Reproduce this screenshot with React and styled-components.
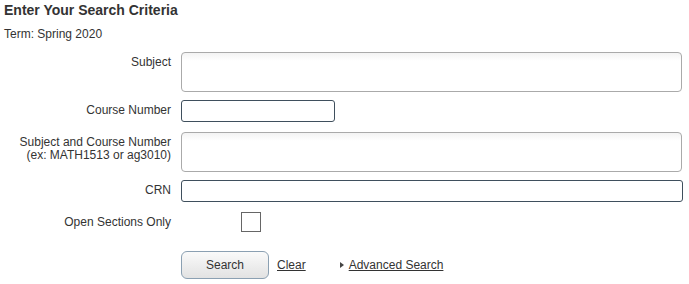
import React from 'react';
import styled, { createGlobalStyle } from 'styled-components';

const Global = createGlobalStyle`
  body {
    margin: 0;
    padding: 0 4px;
    font-family: "Liberation Sans", Arial, sans-serif;
    color: #333;
    background: #fff;
  }
`;

const Page = styled.div`
  padding-top: 2px;
`;

const Title = styled.h2`
  margin: 0;
  font-size: 14px;
  line-height: 16px;
  font-weight: bold;
  color: #333;
`;

const Term = styled.div`
  margin-top: 9px;
  font-size: 12px;
  line-height: 14px;
`;

const Form = styled.div`
  margin-top: 11px;
  display: grid;
  grid-template-columns: 167px 501px;
  column-gap: 10px;
  align-items: start;
`;

const Label = styled.label`
  text-align: right;
  font-size: 12px;
  line-height: 13px;
  padding-top: ${(p) => p.$top || 4}px;
  margin-bottom: ${(p) => p.$gap}px;
`;

const Field = styled.div`
  margin-bottom: ${(p) => p.$gap}px;
`;

const Area = styled.div`
  box-sizing: border-box;
  width: 501px;
  height: 40px;
  border: 1px solid #aaa;
  border-radius: 4px;
  background: linear-gradient(#f3f3f3, #fff 8px);
`;

const Input = styled.div`
  box-sizing: border-box;
  width: ${(p) => p.$w}px;
  height: 22px;
  border: 1px solid #3f4f5d;
  border-radius: 3px;
  background: #fff;
`;

const Check = styled.div`
  box-sizing: border-box;
  margin-left: 60px;
  width: 20px;
  height: 20px;
  border: 1px solid #666;
  background: #fff;
`;

const Actions = styled.div`
  grid-column: 2;
  display: flex;
  align-items: center;
  font-size: 12px;
`;

const Button = styled.button`
  box-sizing: border-box;
  width: 88px;
  height: 28px;
  border: 1px solid #8ba0b2;
  border-radius: 6px;
  background: linear-gradient(#fafafa, #e2e2e2);
  font-family: inherit;
  font-size: 12px;
  color: #333;
`;

const Link = styled.a`
  color: #333;
  text-decoration: underline;
  margin-left: ${(p) => p.$ml}px;
`;

const Arrow = styled.span`
  margin-left: 34px;
  width: 0;
  height: 0;
  border-top: 3px solid transparent;
  border-bottom: 3px solid transparent;
  border-left: 4px solid #444;
`;

export default function App() {
  return (
    <Page>
      <Global />
      <Title>Enter Your Search Criteria</Title>
      <Term>Term: Spring 2020</Term>
      <Form>
        <Label $gap={8}>Subject</Label>
        <Field $gap={8}><Area /></Field>

        <Label $gap={10}>Course Number</Label>
        <Field $gap={10}><Input $w={154} /></Field>

        <Label $gap={8}>Subject and Course Number<br />(ex: MATH1513 or ag3010)</Label>
        <Field $gap={8}><Area /></Field>

        <Label $gap={10}>CRN</Label>
        <Field $gap={10}><Input $w={502} /></Field>

        <Label $gap={19} $top={4}>Open Sections Only</Label>
        <Field $gap={19}><Check /></Field>

        <Actions>
          <Button>Search</Button>
          <Link $ml={8}>Clear</Link>
          <Arrow />
          <Link $ml={5}>Advanced Search</Link>
        </Actions>
      </Form>
    </Page>
  );
}
